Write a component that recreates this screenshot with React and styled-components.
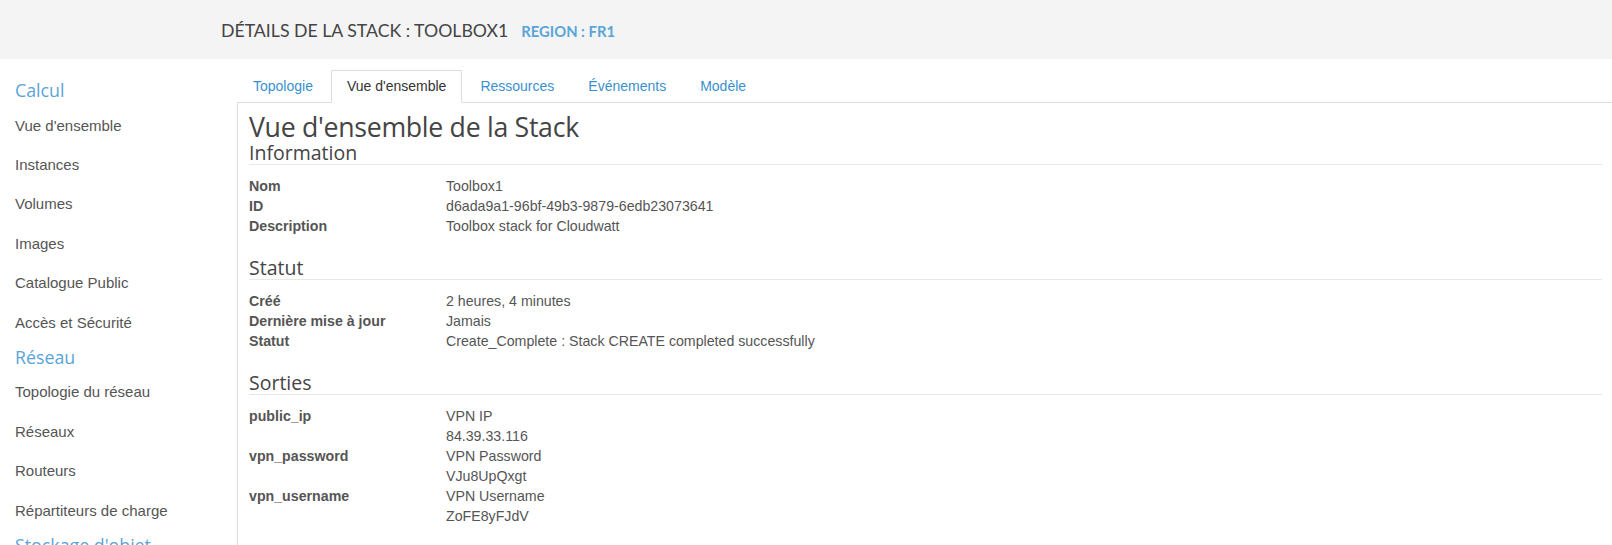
import React from "react";
import styled, { createGlobalStyle } from "styled-components";

const Global = createGlobalStyle`
  html, body { margin: 0; padding: 0; background: #fff; overflow: hidden; }
  body { font-family: "Liberation Sans", Arial, sans-serif; color: #555; }
  * { box-sizing: border-box; }
`;

const Page = styled.div`
  display: flex;
  flex-direction: column;
  width: 1612px;
  min-height: 545px;
`;

const TopBar = styled.header`
  height: 59px;
  background: #f4f4f4;
  display: flex;
  align-items: center;
  padding-left: 221px;
  padding-top: 2px;
  gap: 13px;
`;

const PageTitle = styled.h1`
  margin: 0;
  font-family: Lato, sans-serif;
  font-weight: 400;
  font-size: 17.7px;
  color: #444;
  text-transform: uppercase;
`;

const Region = styled.span`
  font-family: Lato, sans-serif;
  font-weight: 700;
  font-size: 14.8px;
  color: #5aa5d8;
  text-transform: uppercase;
`;

const Body = styled.div`
  display: flex;
  flex: 1;
`;

const Sidebar = styled.nav`
  width: 237px;
  flex-shrink: 0;
  padding-top: 16px;
  display: flex;
  flex-direction: column;
`;

const Section = styled.div`
  height: 30.5px;
  display: flex;
  align-items: center;
  padding-left: 15px;
  font-family: "Open Sans", sans-serif;
  font-size: 17.8px;
  color: #5aa5d8;
`;

const NavItem = styled.a`
  display: block;
  padding: 10px 15px;
  line-height: 19.4px;
  font-size: 15px;
  color: #555;
  text-decoration: none;
`;

const Main = styled.div`
  flex: 1;
  display: flex;
  flex-direction: column;
  padding-top: 11px;
`;

const Tabs = styled.ul`
  list-style: none;
  margin: 0;
  padding: 0;
  display: flex;
  position: relative;
  z-index: 1;
`;

const Tab = styled.li`
  margin-right: 2px;
  margin-bottom: -1px;
  padding: 6px 15px;
  line-height: 19px;
  font-size: 14px;
  border: 1px solid ${(p) => (p.$active ? "#ddd" : "transparent")};
  border-bottom-color: ${(p) => (p.$active ? "#fff" : "transparent")};
  background: ${(p) => (p.$active ? "#fff" : "transparent")};
  color: ${(p) => (p.$active ? "#333" : "#3a8fd0")};
`;

const Panel = styled.div`
  flex: 1;
  border-top: 1px solid #ddd;
  border-left: 1px solid #ddd;
  padding: 9px 10px 0 11px;
`;

const Heading = styled.h2`
  margin: 0;
  font-family: "Open Sans", sans-serif;
  font-weight: 400;
  font-size: 26.7px;
  line-height: 30px;
  color: #444;
  letter-spacing: -0.3px;
`;

const SubHeading = styled.h3`
  margin: 0;
  font-family: "Open Sans", sans-serif;
  font-weight: 400;
  font-size: 19.5px;
  line-height: 22px;
  color: #444;
  border-bottom: 1px solid #e8e8e8;
`;

const Details = styled.dl`
  margin: 11px 0 21px;
  display: grid;
  grid-template-columns: 197px 1fr;
  font-size: 14.2px;
  line-height: 20px;
`;

const Term = styled.dt`
  font-weight: 700;
  color: #555;
  grid-column: 1;
`;

const Value = styled.dd`
  margin: 0;
  grid-column: 2;
  color: #555;
`;

const sections = [
  {
    title: "Information",
    rows: [
      ["Nom", ["Toolbox1"]],
      ["ID", ["d6ada9a1-96bf-49b3-9879-6edb23073641"]],
      ["Description", ["Toolbox stack for Cloudwatt"]],
    ],
  },
  {
    title: "Statut",
    rows: [
      ["Créé", ["2 heures, 4 minutes"]],
      ["Dernière mise à jour", ["Jamais"]],
      ["Statut", ["Create_Complete : Stack CREATE completed successfully"]],
    ],
  },
  {
    title: "Sorties",
    rows: [
      ["public_ip", ["VPN IP", "84.39.33.116"]],
      ["vpn_password", ["VPN Password", "VJu8UpQxgt"]],
      ["vpn_username", ["VPN Username", "ZoFE8yFJdV"]],
    ],
  },
];

const nav = [
  { section: "Calcul", items: ["Vue d'ensemble", "Instances", "Volumes", "Images", "Catalogue Public", "Accès et Sécurité"] },
  { section: "Réseau", items: ["Topologie du réseau", "Réseaux", "Routeurs", "Répartiteurs de charge"] },
  { section: "Stockage d'objet", items: ["Conteneurs"] },
];

const tabs = ["Topologie", "Vue d'ensemble", "Ressources", "Événements", "Modèle"];

export default function App() {
  return (
    <Page>
      <Global />
      <TopBar>
        <PageTitle>Détails de la Stack : Toolbox1</PageTitle>
        <Region>Region : FR1</Region>
      </TopBar>
      <Body>
        <Sidebar>
          {nav.map((g) => (
            <React.Fragment key={g.section}>
              <Section>{g.section}</Section>
              {g.items.map((i) => (
                <NavItem key={i} href="#">{i}</NavItem>
              ))}
            </React.Fragment>
          ))}
        </Sidebar>
        <Main>
          <Tabs>
            {tabs.map((t) => (
              <Tab key={t} $active={t === "Vue d'ensemble"}>{t}</Tab>
            ))}
          </Tabs>
          <Panel>
            <Heading>Vue d'ensemble de la Stack</Heading>
            {sections.map((s) => (
              <React.Fragment key={s.title}>
                <SubHeading>{s.title}</SubHeading>
                <Details>
                  {s.rows.map(([k, vals]) => (
                    <React.Fragment key={k}>
                      <Term style={{ gridRow: `span ${vals.length}` }}>{k}</Term>
                      {vals.map((v) => (
                        <Value key={v}>{v}</Value>
                      ))}
                    </React.Fragment>
                  ))}
                </Details>
              </React.Fragment>
            ))}
          </Panel>
        </Main>
      </Body>
    </Page>
  );
}
